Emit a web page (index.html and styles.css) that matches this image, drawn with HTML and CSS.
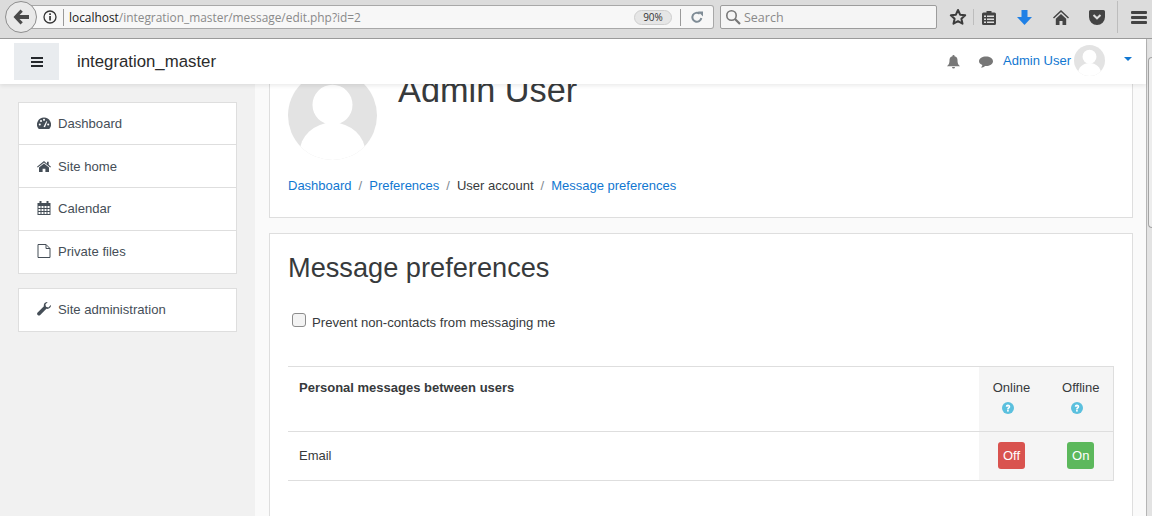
FILE: index.html
```html
<!DOCTYPE html>
<html lang="en">
<head>
<meta charset="utf-8">
<title>Message preferences</title>
<link rel="stylesheet" href="styles.css">
</head>
<body>
<header class="browser">
  <div class="back"><svg width="18" height="16" viewBox="0 0 18 16"><path d="M8.500 .5 1.500 8l7 7.500 2.300-2.300L7.500 10H17V6H7.500l3.300-3.200z" fill="#4a4a4a"/></svg></div>
  <div class="urlbar">
    <svg class="info" width="14" height="14" viewBox="0 0 14 14"><circle cx="7" cy="7" r="6" fill="none" stroke="#333" stroke-width="1.300"/><rect x="6.200" y="6" width="1.700" height="4.500" fill="#333"/><rect x="6.200" y="3.300" width="1.700" height="1.700" fill="#333"/></svg>
    <span class="sep"></span>
    <span class="url"><b>localhost</b>/integration_master/message/edit.php?id=2</span>
    <span class="zoomlevel">90%</span>
    <span class="sep sep-r"></span>
    <svg class="reload" width="14" height="14" viewBox="0 0 14 14"><path d="M11.300 8a4.500 4.500 0 1 1-1.600-4.200" fill="none" stroke="#7f8c96" stroke-width="2"/><path d="M8 1.500h5V6.500z" fill="#7f8c96"/></svg>
  </div>
  <div class="searchbar">
    <svg width="16" height="16" viewBox="0 0 16 16"><circle cx="6.500" cy="6.500" r="4.700" fill="none" stroke="#777" stroke-width="1.600"/><path d="m10 10 5 5" stroke="#777" stroke-width="2.200"/></svg>
    <span>Search</span>
  </div>
  <div class="tools">
    <svg class="t-star" width="18" height="18" viewBox="0 0 18 18"><path d="M9 2l2.100 4.700 5.100.6-3.800 3.400 1.100 5L9 13.200l-4.500 2.500 1.100-5-3.800-3.400 5.100-.6z" fill="none" stroke="#3c3c3c" stroke-width="2" stroke-linejoin="round"/></svg>
    <span class="tool-sep"></span>
    <svg class="t-list" width="14" height="15" viewBox="0 0 14 15"><path d="M1.500 2.500h3V1h5v1.500h3A1.500 1.500 0 0 1 14 4v9.500A1.500 1.500 0 0 1 12.500 15h-11A1.500 1.500 0 0 1 0 13.500V4a1.500 1.500 0 0 1 1.500-1.500z" fill="#444"/><path d="M2 5.500h2v1.500H2zm3 0h7v1.500H5zM2 8.500h2V10H2zm3 0h7V10H5zM2 11.500h2V13H2zm3 0h7V13H5z" fill="#ddd"/></svg>
    <svg class="t-down" width="15" height="15" viewBox="0 0 15 15"><path d="M4.500 0h6v7H15l-7.500 8L0 7h4.500z" fill="#1f80e6"/></svg>
    <svg class="t-home" width="16" height="15" viewBox="0 0 16 15"><path d="M8 0 0 7.500l1 1L8 2l7 6.500 1-1z" fill="#444"/><path d="M2.800 8.700 8 4l5.200 4.700V15H9.500v-4h-3v4H2.800z" fill="#444"/></svg>
    <svg class="t-pocket" width="16" height="15" viewBox="0 0 16 15"><path d="M1.500 0h13A1.500 1.500 0 0 1 16 1.500V7A8 8 0 0 1 0 7V1.500A1.500 1.500 0 0 1 1.500 0z" fill="#444"/><path d="m4.500 5 3.500 3.300L11.500 5" fill="none" stroke="#ddd" stroke-width="2"/></svg>
    <span class="tool-sep tool-sep-b"></span>
    <span class="burger"><i></i><i></i><i></i></span>
  </div>
</header>

<div class="viewport">
  <nav class="navbar">
    <button class="nav-toggle" type="button" aria-label="Menu"><i></i><i></i><i></i></button>
    <span class="brand">integration_master</span>
    <div class="nav-right">
      <svg class="ico-bell" width="13" height="14" viewBox="0 0 13 14"><path d="M6.500 0A1 1 0 0 1 7.500 1.200 4 4 0 0 1 10.500 5.200c0 3.800 1.200 4.600 2.500 6H0c1.300-1.400 2.500-2.200 2.500-6a4 4 0 0 1 3-4A1 1 0 0 1 6.500 0zM5 12h3a1.500 1.500 0 0 1-3 0z" fill="#777"/></svg>
      <svg class="ico-chat" width="14" height="12" viewBox="0 0 14 12"><path d="M7 .5c3.700 0 7 2 7 4.700S10.700 10 7 10l-1-.1C5 11 3.500 11.500 2 11.600c.8-.8 1.300-1.600 1.400-2.600C1.400 8.200 0 6.800 0 5.200 0 2.500 3.300.5 7 .5z" fill="#777"/></svg>
      <a class="user-link" href="#">Admin User</a>
      <svg class="avatar-small" width="31" height="31" viewBox="0 0 100 100"><use href="#avatar"/></svg>
      <span class="caret"></span>
    </div>
  </nav>

  <div class="page">
    <aside class="sidebar">
      <ul class="menu">
        <li><svg class="mi" width="15" height="13" viewBox="0 0 15 13"><path d="M7.500 0A7.500 7.500 0 0 0 1.300 11.700l.6.8h11.200l.6-.8A7.500 7.500 0 0 0 7.500 0z" fill="#454e57"/><circle cx="3" cy="7.500" r="1.100" fill="#fff"/><circle cx="4.300" cy="3.900" r="1.100" fill="#fff"/><circle cx="7.500" cy="2.600" r="1.100" fill="#fff"/><circle cx="12" cy="7.500" r="1.100" fill="#fff"/><path d="m7 10 3-6 .9.400L8.600 10.600z" fill="#fff"/></svg>Dashboard</li>
        <li class="row-home"><svg class="mi" width="14" height="11" viewBox="0 0 14 11"><path d="M7 0 0 5.700l.7.800L7 1.400l6.300 5.100.7-.8-2.300-1.900V.7H10v2.100z" fill="#454e57"/><path d="M2 6.500 7 2.400l5 4.100V11H8.400V7.700H5.600V11H2z" fill="#454e57"/></svg>Site home</li>
        <li><svg class="mi" width="13" height="14" viewBox="0 0 13 14"><path d="M0 2h2V0h2v2h5V0h2v2h2v12H0z" fill="#454e57"/><path d="M1 5h2v2H1zm3 0h2v2H4zm3 0h2v2H7zm3 0h2v2h-2zM1 8h2v2H1zm3 0h2v2H4zm3 0h2v2H7zm3 0h2v2h-2zM1 11h2v2H1zm3 0h2v2H4zm3 0h2v2H7zm3 0h2v2h-2z" fill="#fff"/></svg>Calendar</li>
        <li><svg class="mi" width="13" height="14" viewBox="0 0 13 14"><path d="M.5.500h8l4 4v9H.5z M8.500.500v4h4" fill="none" stroke="#454e57"/></svg>Private files</li>
      </ul>
      <ul class="menu menu-single">
        <li><svg class="mi" width="14" height="14" viewBox="0 0 14 14"><path d="M14 3.300c0 2.300-2.200 4.100-4.600 3.500L3 13.300a1.900 1.900 0 0 1-2.600-2.600l6.500-6.500C6.300 1.900 8.200-.3 10.700 0L8.400 2.400l.6 2.400 2.400.6L13.800 3z" fill="#454e57"/></svg>Site administration</li>
      </ul>
    </aside>

    <main class="content">
      <section class="card card-head">
        <div class="head-row">
          <svg class="avatar-big" width="89" height="89" viewBox="0 0 100 100"><use href="#avatar"/></svg>
          <h1>Admin User</h1>
        </div>
        <ol class="crumbs">
          <li><a href="#">Dashboard</a></li>
          <li><a href="#">Preferences</a></li>
          <li>User account</li>
          <li><a href="#">Message preferences</a></li>
        </ol>
      </section>

      <section class="card card-main">
        <h2>Message preferences</h2>
        <label class="check"><input type="checkbox"> <span>Prevent non-contacts from messaging me</span></label>
        <table class="prefs">
          <thead>
            <tr>
              <th class="title">Personal messages between users</th>
              <th class="state state-on">Online<svg class="help" width="12" height="12" viewBox="0 0 13 13"><use href="#help"/></svg></th>
              <th class="state state-off">Offline<svg class="help" width="12" height="12" viewBox="0 0 13 13"><use href="#help"/></svg></th>
            </tr>
          </thead>
          <tbody>
            <tr>
              <td>Email</td>
              <td class="state state-on"><span class="tag tag-off">Off</span></td>
              <td class="state state-off"><span class="tag tag-on">On</span></td>
            </tr>
          </tbody>
        </table>
      </section>
    </main>
  </div>
  <div class="scrolltrack"><span class="scrollthumb"></span></div>
</div>

<svg class="defs" width="0" height="0" aria-hidden="true">
  <defs>
    <clipPath id="avclip"><circle cx="50" cy="50" r="50"/></clipPath>
    <g id="avatar">
      <circle cx="50" cy="50" r="50" fill="#e3e3e3"/>
      <g clip-path="url(#avclip)" fill="#fff">
        <circle cx="50" cy="38" r="22.500"/>
        <ellipse cx="50" cy="92" rx="37" ry="34"/>
      </g>
    </g>
    <g id="help">
      <circle cx="6.500" cy="6.500" r="6.500" fill="#5bc0de"/>
      <path d="M4 5a2.500 2.500 0 0 1 5 .2c0 1.600-1.700 1.600-1.700 2.800H5.500c0-2.100 1.700-2 1.700-2.900 0-.8-1.200-.8-1.400.3z" fill="#fff"/>
      <rect x="5.500" y="8.600" width="1.800" height="1.800" fill="#fff"/>
    </g>
  </defs>
</svg>
</body>
</html>
```
FILE: styles.css
```css
* { box-sizing: border-box; }
html, body { margin: 0; height: 100%; overflow: hidden; }
body {
  display: flex;
  flex-direction: column;
  font-family: "Liberation Sans", Arial, sans-serif;
  font-size: 13.5px;
  color: #373a3c;
  background: #f1f1f1;
}
a { color: #1177d1; text-decoration: none; }
.defs { position: absolute; }

/* browser chrome */
.browser {
  flex: 0 0 39px;
  display: flex;
  align-items: center;
  background: #dcdcdc;
  border-bottom: 1px solid #9a9a9a;
  position: relative;
  font-family: "Open Sans", sans-serif;
}
.back {
  position: absolute;
  left: 5px;
  top: 1px;
  width: 32px;
  height: 32px;
  border-radius: 50%;
  border: 1px solid #8e8e8e;
  background: #e9e9e9;
  display: flex;
  align-items: center;
  justify-content: center;
  z-index: 1;
}
.urlbar {
  margin: -4px 0 0 30px;
  width: 684px;
  height: 24px;
  background: #f7f7f7;
  border: 1px solid #a8a8a8;
  border-left: 0;
  border-radius: 0 3px 3px 0;
  display: flex;
  align-items: center;
  padding-left: 13px;
}
.info { flex: none; }
.sep { width: 1px; height: 17px; background: #9a9a9a; margin-left: 6px; flex: none; }
.url { margin-left: 5px; font-size: 11.900px; color: #8a8a8a; flex: 1; white-space: nowrap; }
.url b { font-weight: 400; color: #222; }
.zoomlevel {
  width: 38px;
  height: 15px;
  border-radius: 8px;
  background: #e6e6e6;
  border: 1px solid #cfcfcf;
  font-size: 10px;
  line-height: 13px;
  text-align: center;
  color: #333;
}
.sep-r { margin-left: 8px; }
.reload { margin: 0 9px 0 9px; flex: none; }
.searchbar {
  margin: -4px 0 0 6px;
  width: 217px;
  height: 24px;
  background: #f5f5f5;
  border: 1px solid #9c9c9c;
  border-radius: 2px;
  display: flex;
  align-items: center;
  gap: 3px;
  padding-left: 4px;
  font-size: 12.5px;
  color: #8a8a8a;
}
.tools { display: flex; align-items: center; margin-top: -4px; flex: 1; height: 32px; }
.t-star { margin-left: 12px; flex: none; }
.tool-sep { width: 1px; height: 16px; background: #bdbdbd; margin-left: 6px; flex: none; }
.t-list { margin-left: 8px; flex: none; }
.t-down { margin-left: 21px; flex: none; }
.t-home { margin-left: 21px; flex: none; }
.t-pocket { margin-left: 20px; flex: none; }
.tool-sep-b { height: 32px; margin-left: 12px; }
.burger { margin-left: 13px; width: 16px; display: flex; flex-direction: column; gap: 2px; }
.burger i { display: block; height: 3px; background: #444; border-radius: 1px; }

/* page viewport */
.viewport { flex: 1; position: relative; overflow: hidden; min-height: 0; }
.navbar {
  position: absolute;
  left: 0; right: 6px; top: 0;
  height: 45px;
  background: #fff;
  box-shadow: 0 2px 4px rgba(0,0,0,.08);
  display: flex;
  align-items: center;
  padding-left: 14px;
  z-index: 2;
}
.nav-toggle {
  width: 45px;
  height: 37px;
  background: #e9ecef;
  border: 0;
  padding: 0;
  display: flex;
  flex-direction: column;
  align-items: center;
  justify-content: center;
  gap: 2px;
}
.nav-toggle i { display: block; width: 12px; height: 2px; background: #24282c; }
.brand { margin-left: 18px; font-size: 16.8px; color: #2b2b2b; }
.nav-right { margin-left: auto; display: flex; align-items: center; font-size: 13px; }
.ico-chat { margin: 0 0 0 19px; }
.user-link { margin: -3px 0 0 10px; color: #1177d1; }
.avatar-small { margin: -3px 0 0 3px; }
.caret {
  width: 0; height: 0;
  margin: -6px 14px 0 19px;
  border: 4.500px solid transparent;
  border-top-color: #1177d1;
  border-bottom: 0;
}

.page {
  display: flex;
  align-items: flex-start;
  height: 100%;
  margin-right: 6px;
  background: #f1f1f1;
  padding-left: 18px;
}
.sidebar { width: 219px; flex: none; margin-top: 63px; display: flex; flex-direction: column; gap: 14px; }
.menu { list-style: none; margin: 0; padding: 0; background: #fff; border: 1px solid #dedede; }
.menu li {
  height: 43px;
  padding: 0 0 2px 18px;
  display: flex;
  align-items: center;
  color: #454e57;
  font-size: 13.100px;
  border-top: 1px solid #dedede;
}
.menu li:first-child { height: 41px; padding-bottom: 0; border-top: 0; }
.menu li.row-home { padding-bottom: 0; }
.menu-single li:first-child { height: 42px; padding-bottom: 2px; }
.mi { width: 14px; margin-right: 7px; flex: none; }

.content {
  margin-left: 18px;
  width: 891px;
  height: calc(100% + 160px);
  margin-top: -100px;
  padding: 0 13px 0 14px;
  background: #fafafa;
  display: flex;
  flex-direction: column;
  gap: 15px;
}
.card { background: #fff; border: 1px solid #dedede; padding: 0 18px; }
.card-head { height: 279px; flex: none; }
.head-row { display: flex; padding-top: 131px; }
.avatar-big { flex: none; }
h1 { margin: -3px 0 0 21px; font-size: 34.300px; line-height: 44px; font-weight: 400; color: #373a3c; height: 44px; }
.crumbs {
  list-style: none;
  margin: 17px 0 0;
  padding: 0;
  display: flex;
  font-size: 13px;
  line-height: 18px;
}
.crumbs li + li::before { content: "/"; color: #818a91; padding: 0 7px; }
.card-main { flex: 1; }
h2 { margin: 17px 0 0; font-size: 27.2px; line-height: 33px; font-weight: 400; color: #373a3c; }
.check { display: flex; align-items: flex-start; margin-top: 29px; font-size: 13.150px; height: 18px; }
.check input {
  appearance: none;
  width: 14px;
  height: 14px;
  margin: 0 6px 0 4px;
  flex: none;
  background: #f3f3f3;
  border: 1px solid #8c8c8c;
  border-radius: 3px;
}
.check span { margin-top: 2px; }
.prefs {
  width: 826px;
  margin-top: 35px;
  border-collapse: collapse;
  font-size: 13px;
  table-layout: fixed;
}
.prefs th, .prefs td { padding: 0; border-top: 1px solid #dedede; border-bottom: 1px solid #dedede; text-align: left; }
.prefs th { height: 65px; vertical-align: top; font-weight: 400; padding-top: 13px; }
.prefs th.title { font-weight: 700; padding-left: 11px; color: #373a3c; }
.prefs td { height: 49px; padding: 0 0 2px 11px; }
.prefs .state { background: #f5f5f5; text-align: center; padding-left: 0; padding-right: 0; }
.prefs .state-on { width: 66px; }
.prefs .state-off { width: 69px; padding-left: 4px; border-right: 1px solid #dedede; }
.help { display: block; margin-top: 7px; }
.state-on .help { margin-left: 23px; }
.state-off .help { margin-left: 22px; }
.tag {
  display: inline-block;
  width: 27px;
  height: 27px;
  line-height: 27px;
  border-radius: 3px;
  color: #fff;
  text-align: center;
  vertical-align: middle;
}
.tag-off { background: #d9534f; }
.tag-on { background: #5cb85c; }

.scrolltrack {
  position: absolute;
  right: 0; top: 0; bottom: 0;
  width: 6px;
  background: #e3e3e3;
  border-left: 1px solid #b5b5b5;
}
.scrollthumb {
  position: absolute;
  left: 1px; top: 18px;
  width: 5px;
  height: 171px;
  border: 1px solid #a5a5a5;
  border-right: 0;
  border-radius: 4px 0 0 4px;
  background: #ededed;
}
```
